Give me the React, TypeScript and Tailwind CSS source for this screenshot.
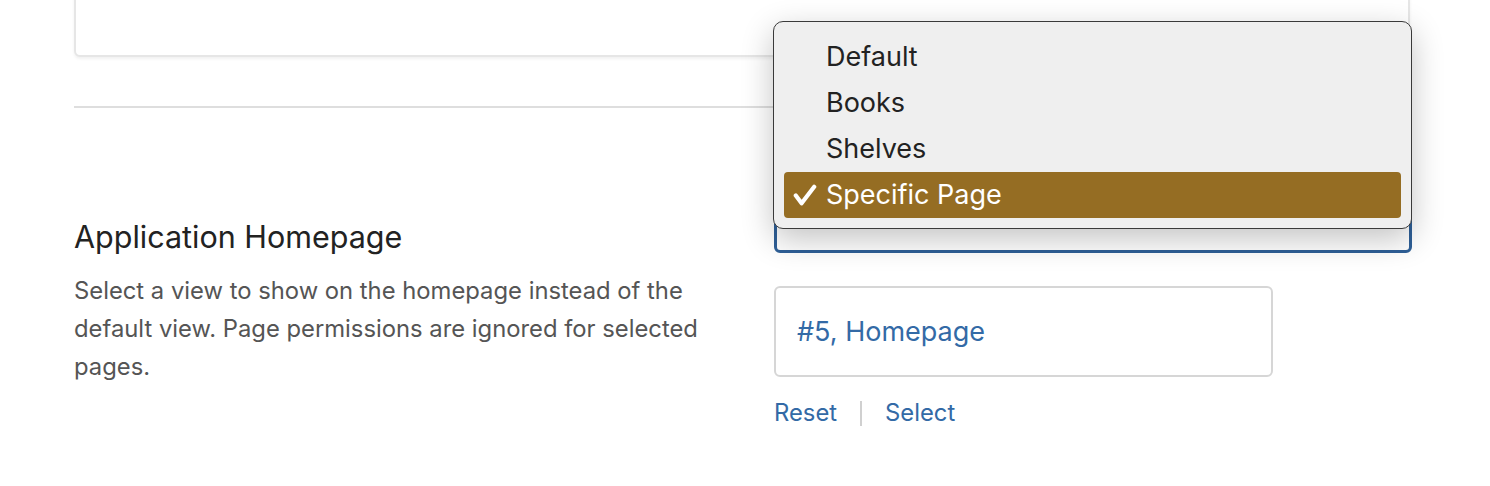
import React from "react";

// ==== Data ====
const options = ["Default", "Books", "Shelves", "Specific Page"];
const selected = "Specific Page";

// ==== Component ====
const App: React.FC = () => {
  return (
    <div className="min-h-screen overflow-hidden bg-white pl-[74px] font-['Inter','Liberation_Sans',sans-serif] antialiased">
      <div className="w-[1336px]">
        {/* 위 카드 (잘린 부분) */}
        <div className="-mt-6 h-[81px] rounded-md border-2 border-[#e6e6e6] bg-white shadow-[0_2px_3px_rgba(0,0,0,0.06)]" />

        <div className="mt-[49px] border-t-2 border-[#dedede]" />

        {/* 설정 행 */}
        <div className="mt-[64px] grid grid-cols-[700px_1fr] items-center">
          <div className="w-[660px] pt-[4px]">
            <h3 className="text-[30.5px] leading-[38px] text-[#222]">Application Homepage</h3>
            <p className="mt-[16px] text-[23.8px] leading-[38px] text-[#555]">
              Select a view to show on the homepage instead of the default view. Page permissions are ignored for
              selected pages.
            </p>
          </div>

          <div className="relative">
            <div className="flex h-[81px] w-[638px] items-center rounded-md border-[3px] border-[#2e5f97] px-[20px] pt-[2px] text-[27px] text-[#222]">
              {selected}
            </div>

            {/* 열린 드롭다운 메뉴 */}
            <div className="absolute -top-[151px] -left-[1px] w-[639px] rounded-[10px] border-[1.5px] border-[#3a3a3a] bg-[#efefef] px-[10px] pt-[12px] pb-[10px] shadow-[0_10px_32px_rgba(0,0,0,0.24)]">
              {options.map((o) => (
                <div
                  key={o}
                  className={
                    "flex h-[46px] items-center rounded-[4px] text-[27px] " +
                    (o === selected ? "bg-[#956d23] text-white" : "text-[#222]")
                  }
                >
                  <span className="flex w-[42px] justify-center">
                    {o === selected && (
                      <svg width="24" height="22" viewBox="0 0 24 22" fill="none">
                        <path
                          d="M2.8 11.5 L8.6 19.3 L21.2 2.8"
                          stroke="white"
                          strokeWidth="4.2"
                          strokeLinecap="round"
                          strokeLinejoin="round"
                        />
                      </svg>
                    )}
                  </span>
                  <span>{o}</span>
                </div>
              ))}
            </div>

            <div className="mt-[33px] flex h-[91px] w-[499px] items-center rounded-md border-2 border-[#d6d6d6] px-[21px] pt-[2px] text-[27px] text-[#336aa6]">
              #5, Homepage
            </div>

            <div className="mt-[21px] flex items-center text-[23.8px] leading-[30px] text-[#336aa6]">
              <span>Reset</span>
              <span className="mx-[23px] h-[25px] w-[2px] bg-[#d0d0d0]" />
              <span>Select</span>
            </div>
          </div>
        </div>
      </div>
    </div>
  );
};

export default App;
